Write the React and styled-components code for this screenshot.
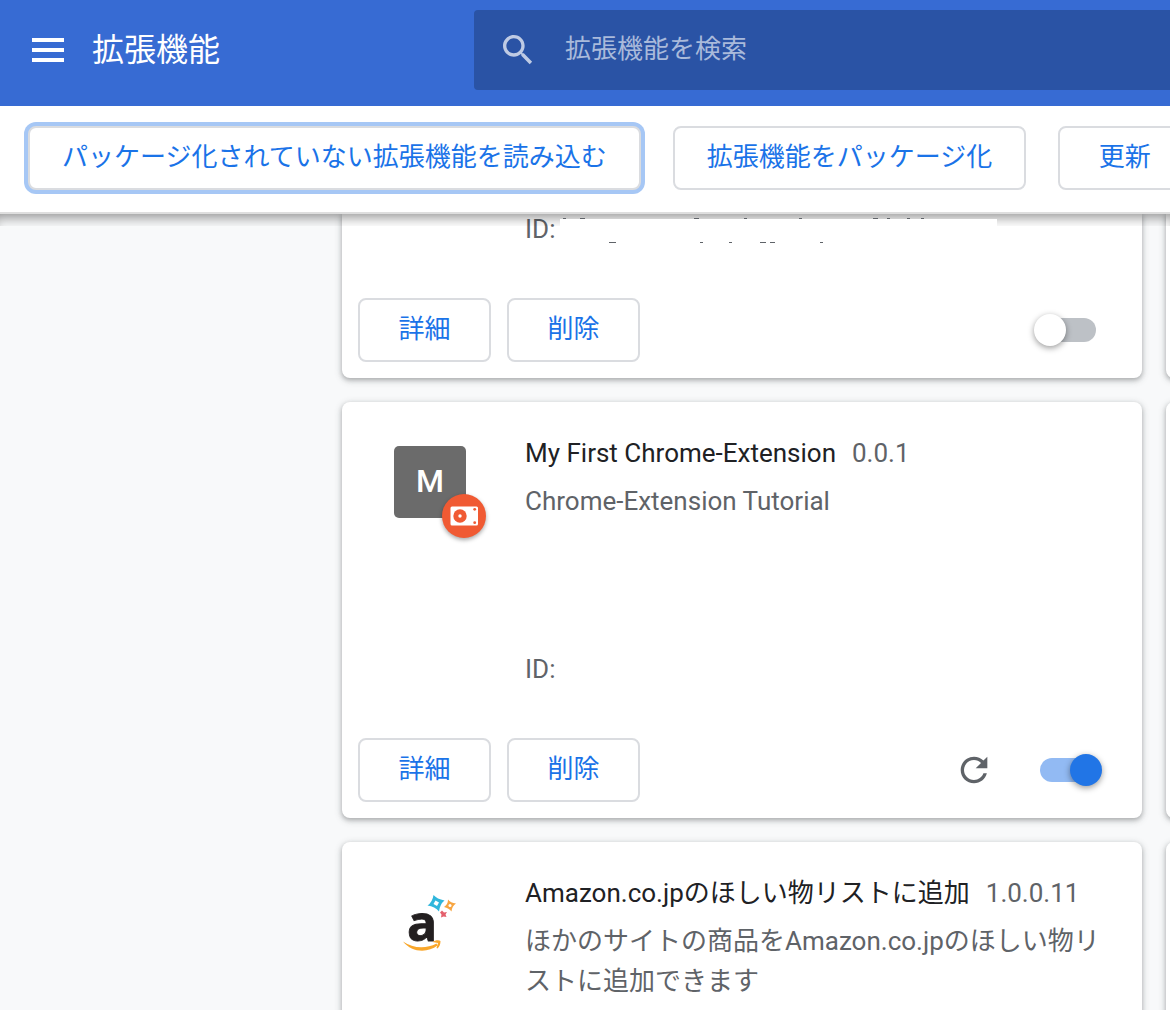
import React from 'react'
import styled, {createGlobalStyle} from 'styled-components'

const GlobalStyle = createGlobalStyle`
  * {
    box-sizing: border-box;
  }

  body {
    margin: 0;
    background: #f8f9fa;
    font-family: Roboto, "Noto Sans CJK JP", sans-serif;
    font-size: 26px;
    line-height: 40px;
  }
`

const Page = styled.div`
  display: flex;
  flex-direction: column;
  height: 100vh;
  overflow: hidden;
`

const Header = styled.header`
  display: flex;
  padding: 10px 0 16px;
  background: #376bd3;
  color: #fff;
`

const Brand = styled.div`
  display: flex;
  flex: 0 0 474px;
  align-items: center;
  gap: 28px;
  padding-left: 32px;
`

const MenuButton = styled.button`
  display: flex;
  padding: 0;
  border: 0;
  background: none;
  color: inherit;
`

const Heading = styled.h1`
  margin: 0;
  font-size: 32px;
  font-weight: 400;
`

const Search = styled.div`
  display: flex;
  flex: 1;
  align-items: center;
  gap: 27px;
  height: 80px;
  padding-left: 24px;
  border-radius: 4px 0 0 4px;
  background: #2a53a5;
  color: #bfcbe4;
`

const SearchInput = styled.input`
  flex: 1;
  min-width: 0;
  height: 40px;
  padding: 0 0 2px;
  border: 0;
  outline: 0;
  background: none;
  color: #fff;
  font: inherit;

  &::placeholder {
    color: #a9badb;
    opacity: 1;
  }
`

const Toolbar = styled.div`
  display: flex;
  flex: none;
  gap: 32px;
  padding: 20px 28px 22px;
  border-bottom: 2px solid #dedede;
  background: #fff;
`

const Button = styled.button`
  flex: none;
  min-width: 133px;
  height: 64px;
  padding: 0 32px 2px;
  border: 2px solid #dadce0;
  border-radius: 8px;
  background: #fff;
  box-shadow: ${props => props.$focused ? '0 0 0 4px #a6c7f5' : 'none'};
  color: #1a73e8;
  font: inherit;
  white-space: nowrap;
`

const Content = styled.main`
  position: relative;
  flex: 1;
  min-height: 0;
  overflow: hidden;
`

const ScrollShadow = styled.div`
  position: absolute;
  top: 0;
  left: 0;
  right: 0;
  height: 12px;
  box-shadow: inset 0 10px 12px -6px rgba(0, 0, 0, 0.4);
`

const CardGrid = styled.div`
  display: grid;
  grid-template-columns: repeat(2, minmax(800px, 1fr));
  gap: 24px;
  padding-left: 342px;
`

const Card = styled.article`
  display: flex;
  flex-direction: column;
  min-height: ${props => props.$scrolled ? '164px' : '416px'};
  border-radius: ${props => props.$scrolled ? '0 0 8px 8px' : '8px'};
  background: #fff;
  box-shadow: 0 2px 4px rgba(60, 64, 67, 0.3), 0 2px 6px 2px rgba(60, 64, 67, 0.15);
`

const CardBody = styled.div`
  display: flex;
  flex: 1;
  padding: ${props => props.$scrolled ? '0 40px 0 52px' : '31px 40px 49px 52px'};
`

const IconSlot = styled.div`
  flex: 0 0 131px;
  padding-top: 13px;
`

const LetterIcon = styled.div`
  position: relative;
  width: 72px;
  height: 72px;
  border-radius: 5px;
  background: #6b6b6b;
  color: #fff;
  font-size: 32px;
  font-weight: 500;
  line-height: 70px;
  text-align: center;
`

const SourceBadge = styled.span`
  position: absolute;
  top: 48px;
  left: 48px;
  display: flex;
  width: 44px;
  height: 44px;
  border-radius: 50%;
  background: #f05a33;
  box-shadow: 0 2px 4px rgba(0, 0, 0, 0.35);
`

const Info = styled.div`
  display: flex;
  flex: 1;
  flex-direction: column;
  min-width: 0;
  color: #5f6368;
`

const NameRow = styled.div`
  display: flex;
  gap: 16px;
  height: 40px;
`

const Name = styled.h2`
  margin: 0;
  color: #202124;
  font-size: 26px;
  font-weight: 400;
`

const Description = styled.p`
  flex: 1;
  margin: 8px 0 0;
`

const IdRow = styled.div`
  display: flex;
  align-items: center;
  gap: 5px;
  height: ${props => props.$scrolled ? '30px' : '40px'};
`

const MaskedId = styled.svg`
  position: relative;
  z-index: 1;
  flex: none;
`

const CardFooter = styled.div`
  display: flex;
  align-items: center;
  gap: 16px;
  padding: 0 46px 16px 16px;
`

const Controls = styled.div`
  display: flex;
  align-items: center;
  gap: 46px;
  margin-left: auto;
`

const IconButton = styled.button`
  display: flex;
  padding: 0;
  border: 0;
  background: none;
  color: #5f6368;
`

const Toggle = styled.input.attrs({type: 'checkbox', role: 'switch'})`
  position: relative;
  width: 56px;
  height: 24px;
  margin: 0;
  border-radius: 12px;
  appearance: none;
  background: #bdc1c6;

  &::before {
    content: '';
    position: absolute;
    top: -4px;
    left: -6px;
    width: 32px;
    height: 32px;
    border-radius: 50%;
    background: #fff;
    box-shadow: 0 2px 6px rgba(0, 0, 0, 0.4);
  }

  &:checked {
    background: #92baf3;
  }

  &:checked::before {
    left: 30px;
    background: #2175e6;
  }
`

const MenuIcon = () => (
  <svg width="32" height="24" viewBox="0 0 32 24" fill="currentColor" aria-hidden="true">
    <path d="M0 0h32v4H0zM0 10h32v4H0zM0 20h32v4H0z" />
  </svg>
)

const SearchIcon = () => (
  <svg width="40" height="40" viewBox="0 0 24 24" fill="currentColor" aria-hidden="true">
    <path d="M15.5 14h-.79l-.28-.27C15.41 12.59 16 11.11 16 9.5 16 5.91 13.09 3 9.5 3S3 5.91 3 9.5 5.91 16 9.5 16c1.61 0 3.09-.59 4.23-1.57l.27.28v.79l5 4.99L20.49 19l-4.99-5zm-6 0C7.01 14 5 11.99 5 9.5S7.01 5 9.5 5 14 7.01 14 9.5 11.99 14 9.5 14z" />
  </svg>
)

const ReloadIcon = () => (
  <svg width="40" height="40" viewBox="0 0 24 24" fill="currentColor" aria-hidden="true">
    <path d="M17.65 6.35C16.2 4.9 14.21 4 12 4c-4.42 0-7.99 3.58-7.99 8s3.57 8 7.99 8c3.73 0 6.84-2.55 7.73-6h-2.08c-.82 2.33-3.04 4-5.65 4-3.31 0-6-2.69-6-6s2.69-6 6-6c1.66 0 3.14.69 4.22 1.78L13 11h7V4l-2.35 2.35z" />
  </svg>
)

const DriveIcon = () => (
  <svg width="44" height="44" viewBox="0 0 44 44" aria-hidden="true">
    <rect x="8.5" y="12.5" width="27.5" height="19" rx="1.5" fill="#fff" />
    <circle cx="18" cy="22" r="6.7" fill="#f05a33" />
    <circle cx="18" cy="22" r="1.7" fill="#fff" />
    <circle cx="32.7" cy="15.3" r="1.4" fill="#f05a33" />
    <circle cx="32.7" cy="28.7" r="1.4" fill="#f05a33" />
  </svg>
)

const WishListIcon = () => (
  <svg width="72" height="72" viewBox="0 0 72 72" role="img" aria-label="Amazon">
    <text x="13" y="55" fill="#231f20" stroke="#231f20" strokeWidth=".8" fontFamily="Open Sans, sans-serif" fontSize="50" fontWeight="700">a</text>
    <path d="M9 55.500C19 62.500 32 63 42.500 57.500L43.500 59.500C34 67 18 67 9 55.500z" fill="#f9a72b" />
    <path d="M38.500 56C41 54 45 53.500 46.500 55C46.500 58 45.500 60.500 43.500 62.500L42.500 62L44 57z" fill="#f9a72b" />
    <path d="M39.500 9Q43 13 50.500 14.500Q46 18 45 25.500Q41 20.500 33.500 19.500Q38.500 16 39.500 9z" fill="#2fb6dc" />
    <path d="M41.500 14.500L45 16.500L43 20L39.500 18z" fill="#fff" />
    <path d="M54 13.500Q56.500 17 62 17.500Q58 20 57.500 25.500Q55 22 50 21Q54 18.500 54 13.500z" fill="#f7a541" />
    <circle cx="56" cy="19.500" r="1.500" fill="#fff" />
    <path d="M48 24.500L50 26.500L53 26L51.500 28.500L52.500 31L49.500 30.500L47 31.500L47.500 28.500L46 26.500z" fill="#e4606d" />
  </svg>
)

// Only the tips of the letters show above and below the white strip
const HiddenId = () => (
  <MaskedId width="437" height="30" viewBox="0 0 437 30" aria-hidden="true">
    <path d="M0 5h437v24H0z" fill="#fff" />
    <path
      d="M3 4.500h3M20 4.500h5M134 4.500h5M184 4.500h3M239 4.500h3M313 4.500h5M327 4.500h3M347 4.500h3M361 4.500h3"
      stroke="#5f6368"
    />
    <path
      d="M49 28.500h7M140 28.500h3M169 28.500h3M200 28.500h6M210 28.500h5M260 28.500h3"
      stroke="#5f6368"
    />
  </MaskedId>
)

const extensions = [
  {
    key: 'previous',
    scrolled: true,
    actions: true,
    enabled: false,
  },
  {
    key: 'first',
    name: 'My First Chrome-Extension',
    version: '0.0.1',
    description: 'Chrome-Extension Tutorial',
    icon: <LetterIcon>M<SourceBadge><DriveIcon /></SourceBadge></LetterIcon>,
    actions: true,
    reloadable: true,
    enabled: true,
  },
  {
    key: 'wishlist',
    name: 'Amazon.co.jpのほしい物リストに追加',
    version: '1.0.0.11',
    description: 'ほかのサイトの商品をAmazon.co.jpのほしい物リストに追加できます',
    icon: <WishListIcon />,
  },
]

const ExtensionCard = ({item}) => {
  const [enabled, setEnabled] = React.useState(item.enabled)

  return (
    <Card $scrolled={item.scrolled}>
      <CardBody $scrolled={item.scrolled}>
        <IconSlot>{item.icon}</IconSlot>
        <Info>
          {item.name && (
            <>
              <NameRow>
                <Name>{item.name}</Name>
                <span>{item.version}</span>
              </NameRow>
              <Description>{item.description}</Description>
            </>
          )}
          {item.actions && (
            <IdRow $scrolled={item.scrolled}>
              <span>ID:</span>
              {item.scrolled && <HiddenId />}
            </IdRow>
          )}
        </Info>
      </CardBody>
      {item.actions && (
        <CardFooter>
          <Button>詳細</Button>
          <Button>削除</Button>
          <Controls>
            {item.reloadable && <IconButton aria-label="再読み込み"><ReloadIcon /></IconButton>}
            <Toggle aria-label="有効" checked={enabled} onChange={() => setEnabled(!enabled)} />
          </Controls>
        </CardFooter>
      )}
    </Card>
  )
}

const App = () => {
  const [query, setQuery] = React.useState('')

  return (
    <>
      <GlobalStyle />
      <Page>
        <Header>
          <Brand>
            <MenuButton aria-label="メニュー"><MenuIcon /></MenuButton>
            <Heading>拡張機能</Heading>
          </Brand>
          <Search>
            <SearchIcon />
            <SearchInput
              aria-label="拡張機能を検索"
              placeholder="拡張機能を検索"
              value={query}
              onChange={e => setQuery(e.target.value)}
            />
          </Search>
        </Header>

        <Toolbar>
          <Button $focused>パッケージ化されていない拡張機能を読み込む</Button>
          <Button>拡張機能をパッケージ化</Button>
          <Button>更新</Button>
        </Toolbar>

        <Content>
          <CardGrid>
            {extensions.map(item => (
              <React.Fragment key={item.key}>
                <ExtensionCard item={item} />
                <Card $scrolled={item.scrolled} />
              </React.Fragment>
            ))}
          </CardGrid>
          <ScrollShadow />
        </Content>
      </Page>
    </>
  )
}

export default App
